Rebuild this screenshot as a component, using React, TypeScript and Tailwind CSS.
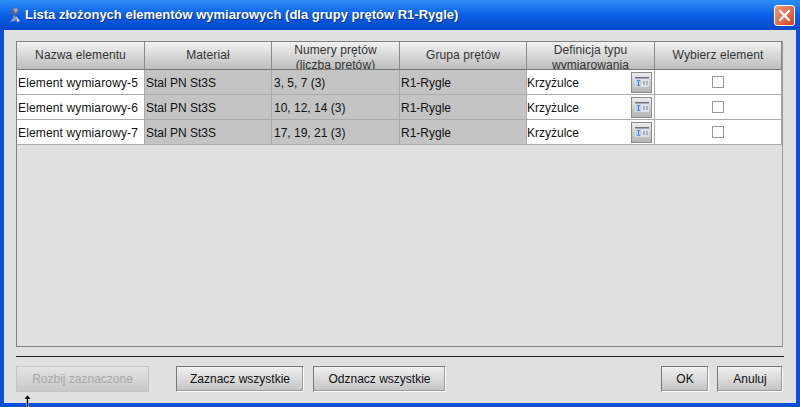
import React from 'react';

const columns = [
  { label: 'Nazwa elementu', width: 'w-[128px]' },
  { label: 'Materiał', width: 'w-[127px]' },
  { label: 'Numery prętów (liczba prętów)', width: 'w-[128px]', wrap: true },
  { label: 'Grupa prętów', width: 'w-[127px]' },
  { label: 'Definicja typu wymiarowania', width: 'w-[128px]', wrap: true },
  { label: 'Wybierz element', width: 'w-[127px]' },
];

const rows = [
  { name: 'Element wymiarowy-5', numbers: '3, 5, 7 (3)' },
  { name: 'Element wymiarowy-6', numbers: '10, 12, 14 (3)' },
  { name: 'Element wymiarowy-7', numbers: '17, 19, 21 (3)' },
];

const AppIcon = () => (
  <svg width="16" height="18" viewBox="0 0 16 18" className="shrink-0">
    <path d="M3 5 L8 1 L12 3 L11 8 L7 9 L4 8 Z" fill="#4f6288" />
    <path d="M6 3 L10 2 L11 5 L8 7 Z" fill="#8fa4cc" />
    <path d="M7 9 L10 12 L8 15 L3 16 L6 12 Z" fill="#8d98a8" />
    <path d="M9 10 L13 15 L10 16 Z" fill="#d5dbe6" />
  </svg>
);

const DefinitionIcon = () => (
  <svg width="14" height="10" viewBox="0 0 14 10">
    <rect x="0" y="0" width="14" height="10" fill="#dfe1e5" />
    <rect x="0" y="0" width="14" height="1.5" fill="#6b7280" />
    <rect x="1" y="2.5" width="5" height="7" fill="#b4cdf0" />
    <path d="M2 3.5h3M3.5 3.5v5M2 8.5h3" stroke="#5b8ad4" strokeWidth="1" fill="none" />
    <path d="M8 5h2M11 5h2M8 7h2M11 7h2" stroke="#7b8290" strokeWidth="1" />
  </svg>
);

const DialogButton = ({ label, width, disabled }: { label: string; width: string; disabled?: boolean }) => (
  <button
    disabled={disabled}
    className={`${width} h-[26px] shrink-0 text-[12px] bg-gradient-to-b ${
      disabled
        ? 'from-[#e4e4e4] to-[#c8c8c8] text-[#a8a8a8] border border-[#c4c4c4]'
        : 'from-[#f0f0f0] to-[#c4c4c4] text-[#111] border border-t-[#777] border-l-[#777] border-r-[#fff] border-b-[#fff] shadow-[inset_-1px_-1px_0_#999]'
    }`}
  >
    {label}
  </button>
);

export default function App() {
  return (
    <div className="relative w-[800px] h-[407px] overflow-hidden flex flex-col bg-[#0a4fd8] font-['Liberation_Sans',Arial,sans-serif]">
      {/* Pasek tytułu */}
      <div className="h-[30px] shrink-0 flex items-center justify-between pl-[7px] pr-[5px] bg-gradient-to-b from-[#2f8df5] via-[#0a5fe6] to-[#0348c8]">
        <div className="flex items-center gap-[2px]">
          <AppIcon />
          <span className="text-[13px] font-bold text-white [text-shadow:1px_1px_0_#0a2f90]">
            Lista złożonych elementów wymiarowych (dla grupy prętów R1-Rygle)
          </span>
        </div>
        <div className="w-[21px] h-[21px] flex items-center justify-center rounded-[3px] border border-white bg-gradient-to-br from-[#ee9a7c] to-[#d2401c]">
          <svg width="13" height="13" viewBox="0 0 13 13">
            <path d="M2 2 L11 11 M11 2 L2 11" stroke="#fff" strokeWidth="2.4" strokeLinecap="round" />
          </svg>
        </div>
      </div>

      {/* Treść okna */}
      <div className="flex-1 mx-[4px] mb-[4px] bg-[#e0e0e0] flex flex-col pl-[12px] pr-[13px] pt-[11px]">
        <div className="h-[306px] shrink-0 border border-[#808080] border-r-[#999] flex flex-col">
          <div className="flex h-[28px] shrink-0">
            {columns.map((c) => (
              <div
                key={c.label}
                className={`${c.width} shrink-0 overflow-hidden flex items-center justify-center text-center px-[8px] text-[12px] tracking-[0.1px] leading-[15px] text-[#333] border-r border-b border-r-[#8a8a8a] border-b-[#777] bg-gradient-to-b from-[#f2f2f2] to-[#bdbdbd]`}
              >
                <span className={c.wrap ? 'mt-[4px] block' : 'block whitespace-nowrap'}>{c.label}</span>
              </div>
            ))}
          </div>
          {rows.map((r) => (
            <div key={r.name} className="flex h-[25px] shrink-0 text-[12px] text-[#111] leading-none">
              <div className="w-[128px] shrink-0 flex items-center pl-[1px] pt-[1px] tracking-[0.14px] bg-white border-r border-b border-[#aaa] whitespace-nowrap">
                {r.name}
              </div>
              <div className="w-[127px] shrink-0 flex items-center pl-[1px] pt-[1px] bg-[#c4c4c4] border-r border-b border-[#aaa]">
                Stal PN St3S
              </div>
              <div className="w-[128px] shrink-0 flex items-center pl-[2px] pt-[1px] bg-[#c4c4c4] border-r border-b border-[#aaa]">
                {r.numbers}
              </div>
              <div className="w-[127px] shrink-0 flex items-center pl-[1px] pt-[1px] bg-[#c4c4c4] border-r border-b border-[#aaa]">
                R1-Rygle
              </div>
              <div className="w-[128px] shrink-0 flex items-center justify-between pr-[2px] bg-white border-r border-b border-[#aaa]">
                <span className="pt-[1px]">Krzyżulce</span>
                <div className="w-[21px] h-[21px] flex items-center justify-center border border-[#8c8c8c] bg-gradient-to-b from-[#ececec] to-[#b4b4b4]">
                  <DefinitionIcon />
                </div>
              </div>
              <div className="w-[127px] shrink-0 flex items-center justify-center bg-white border-b border-r border-[#aaa]">
                <div className="w-[12px] h-[12px] border border-[#999] bg-white" />
              </div>
            </div>
          ))}
        </div>

        <div className="h-px mt-[9px] mr-[-1px] shrink-0 bg-[#222]" />

        <div className="flex items-start mt-[9px]">
          <DialogButton label="Rozbij zaznaczone" width="w-[133px]" disabled />
          <div className="ml-[27px]">
            <DialogButton label="Zaznacz wszystkie" width="w-[128px]" />
          </div>
          <div className="ml-[9px]">
            <DialogButton label="Odznacz wszystkie" width="w-[133px]" />
          </div>
          <div className="ml-auto flex gap-[8px]">
            <DialogButton label="OK" width="w-[48px]" />
            <DialogButton label="Anuluj" width="w-[66px]" />
          </div>
        </div>
      </div>

      {/* Kursor nad oknem */}
      <svg width="9" height="13" viewBox="0 0 9 13" className="absolute left-[23px] top-[394px]">
        <path d="M4.5 1 L8 5 H5.5 V13 H3.5 V5 H1 Z" fill="#000" stroke="#fff" strokeWidth="0.5" />
      </svg>
    </div>
  );
}
